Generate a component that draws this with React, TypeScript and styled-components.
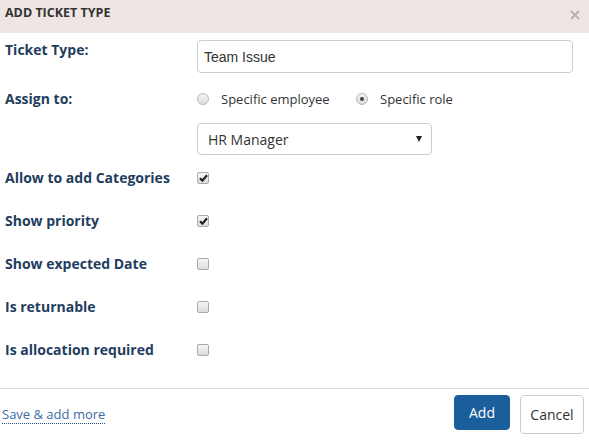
import React from 'react';
import styled, { createGlobalStyle } from 'styled-components';

const GlobalStyle = createGlobalStyle`
  html, body {
    margin: 0;
    padding: 0;
    background: #ffffff;
    font-family: 'Open Sans', 'Liberation Sans', sans-serif;
  }
`;

const Modal = styled.div`
  width: 589px;
  height: 444px;
  background: #ffffff;
  display: flex;
  flex-direction: column;
`;

const Header = styled.div`
  height: 33px;
  box-sizing: border-box;
  padding: 5px 9px 0 5px;
  background: #efe6e4;
  display: flex;
  justify-content: space-between;
  align-items: flex-start;
`;

const Title = styled.h4`
  margin: 0;
  font-size: 12.5px;
  line-height: 16px;
  font-weight: 700;
  color: #333333;
`;

const Close = styled.button`
  border: 0;
  background: none;
  padding: 0;
  margin-top: 5px;
  width: 10px;
  height: 10px;
  display: flex;
  cursor: pointer;
`;

const Body = styled.div`
  padding: 7px 16px 0 5px;
  display: flex;
  flex-direction: column;
  height: 356px;
  box-sizing: border-box;
  border-bottom: 1px solid #dddddd;
`;

const Row = styled.div<{ $gap?: number }>`
  display: flex;
  align-items: flex-start;
  margin-top: ${({ $gap }) => $gap ?? 0}px;
`;

const Label = styled.label`
  width: 192px;
  flex-shrink: 0;
  font-size: 14px;
  line-height: 20px;
  font-weight: 700;
  color: #1f3d5e;
`;

const Control = styled.div`
  flex: 1;
  display: flex;
  flex-direction: column;
  gap: 14px;
`;

const TextInput = styled.input`
  width: 100%;
  height: 33px;
  box-sizing: border-box;
  border: 1px solid #cccccc;
  border-radius: 4px;
  padding: 0 6px;
  font-family: 'Liberation Sans', Arial, sans-serif;
  font-size: 14px;
  color: #333333;
  outline: none;
`;

const RadioGroup = styled.div`
  display: flex;
  align-items: center;
  height: 20px;
`;

const RadioOption = styled.span<{ $width: number }>`
  display: flex;
  align-items: center;
  width: ${({ $width }) => $width}px;
  font-size: 13px;
  color: #333333;
`;

const RadioDot = styled.span<{ $on?: boolean }>`
  width: 12px;
  height: 12px;
  box-sizing: border-box;
  border-radius: 50%;
  border: 1px solid #b8b8b8;
  background: linear-gradient(#f4f4f4, #dcdcdc);
  margin: 0 12px 0 0;
  display: flex;
  align-items: center;
  justify-content: center;
  &::after {
    content: '';
    width: 4px;
    height: 4px;
    border-radius: 50%;
    background: ${({ $on }) => ($on ? '#444444' : 'transparent')};
  }
`;

const Select = styled.div`
  width: 235px;
  height: 32px;
  box-sizing: border-box;
  border: 1px solid #cccccc;
  border-radius: 4px;
  padding: 0 9px 0 10px;
  display: flex;
  align-items: center;
  justify-content: space-between;
  font-size: 14px;
  color: #333333;
`;

const Caret = styled.span`
  width: 0;
  height: 0;
  border-left: 3.5px solid transparent;
  border-right: 3.5px solid transparent;
  border-top: 6px solid #222222;
`;

const Check = styled.span<{ $on?: boolean }>`
  width: 12px;
  height: 12px;
  margin-top: 4px;
  box-sizing: border-box;
  border: 1px solid #aaaaaa;
  border-radius: 2px;
  background: linear-gradient(#f6f6f6, #dddddd);
  display: flex;
  align-items: center;
  justify-content: center;
`;

const Footer = styled.div`
  flex: 1;
  display: flex;
  align-items: flex-start;
  padding: 6px 5px 0 2px;
  gap: 10px;
`;

const MoreLink = styled.a`
  margin-top: 10px;
  margin-right: auto;
  font-size: 13px;
  line-height: 18px;
  color: #3a6da6;
  text-decoration: none;
  border-bottom: 1px dotted #1c4f85;
  cursor: pointer;
`;

const Button = styled.button<{ $primary?: boolean }>`
  height: ${({ $primary }) => ($primary ? 35 : 39)}px;
  width: ${({ $primary }) => ($primary ? 56 : 64)}px;
  padding: 0;
  font-family: 'Open Sans', sans-serif;
  font-size: 14px;
  border-radius: 4px;
  border: 1px solid ${({ $primary }) => ($primary ? '#1b5e9c' : '#cccccc')};
  background: ${({ $primary }) => ($primary ? '#1b5e9c' : '#ffffff')};
  color: ${({ $primary }) => ($primary ? '#ffffff' : '#333333')};
  cursor: pointer;
`;

function CheckMark() {
  return (
    <svg width="9" height="8" viewBox="0 0 9 8">
      <path d="M1 4.2 L3.4 6.6 L8 1.2" stroke="#222" strokeWidth="2.2" fill="none" />
    </svg>
  );
}

const options: { label: string; checked: boolean }[] = [
  { label: 'Allow to add Categories', checked: true },
  { label: 'Show priority', checked: true },
  { label: 'Show expected Date', checked: false },
  { label: 'Is returnable', checked: false },
  { label: 'Is allocation required', checked: false }
];

function App() {
  return (
    <Modal>
      <GlobalStyle />
      <Header>
        <Title>ADD TICKET TYPE</Title>
        <Close aria-label="Close">
          <svg width="10" height="10" viewBox="0 0 10 10">
            <path d="M1 1 L9 9 M9 1 L1 9" stroke="#b5b5b5" strokeWidth="2" />
          </svg>
        </Close>
      </Header>
      <Body>
        <Row>
          <Label>Ticket Type:</Label>
          <Control>
            <TextInput defaultValue="Team Issue" />
          </Control>
        </Row>
        <Row $gap={16}>
          <Label>Assign to:</Label>
          <Control>
            <RadioGroup>
              <RadioOption $width={159}>
                <RadioDot />
                Specific employee
              </RadioOption>
              <RadioOption $width={120}>
                <RadioDot $on />
                Specific role
              </RadioOption>
            </RadioGroup>
            <Select>
              HR Manager
              <Caret />
            </Select>
          </Control>
        </Row>
        {options.map((o, i) => (
          <Row key={o.label} $gap={i === 0 ? 13 : 23}>
            <Label>{o.label}</Label>
            <Check $on={o.checked}>{o.checked ? <CheckMark /> : null}</Check>
          </Row>
        ))}
      </Body>
      <Footer>
        <MoreLink>Save &amp; add more</MoreLink>
        <Button $primary>Add</Button>
        <Button>Cancel</Button>
      </Footer>
    </Modal>
  );
}

export default App;
